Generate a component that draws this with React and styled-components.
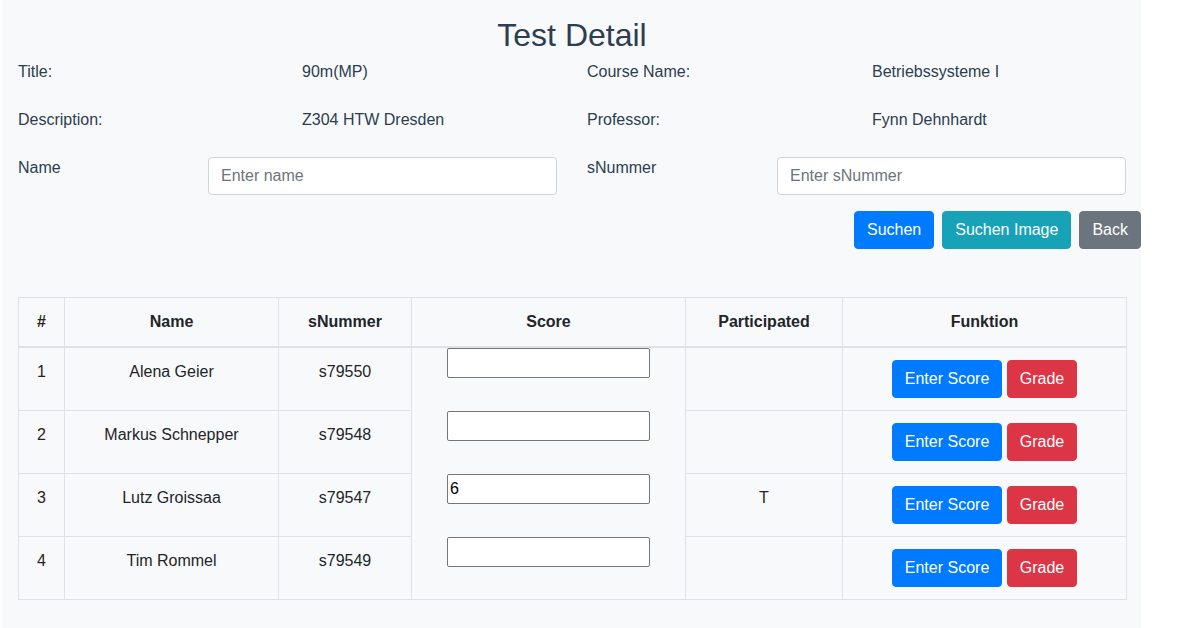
import React from "react";
import styled, { createGlobalStyle } from "styled-components";

const GlobalStyle = createGlobalStyle`
  html, body {
    margin: 0;
    padding: 0;
    background: #fff;
  }
  body {
    font-family: "Liberation Sans", Arial, sans-serif;
    font-size: 16px;
    line-height: 1.5;
    color: #2c3e50;
  }
  * {
    box-sizing: border-box;
  }
`;

const students = [
  { id: 1, name: "Alena Geier", snr: "s79550", score: "", participated: "" },
  { id: 2, name: "Markus Schnepper", snr: "s79548", score: "", participated: "" },
  { id: 3, name: "Lutz Groissaa", snr: "s79547", score: "6", participated: "T" },
  { id: 4, name: "Tim Rommel", snr: "s79549", score: "", participated: "" },
];

const App = () => {
  return (
    <>
      <GlobalStyle />
      <Page>
        <Title>Test Detail</Title>

        <InfoGrid>
          <Cell>Title:</Cell>
          <Cell>90m(MP)</Cell>
          <Cell>Course Name:</Cell>
          <Cell>Betriebssysteme I</Cell>
          <Cell>Description:</Cell>
          <Cell>Z304 HTW Dresden</Cell>
          <Cell>Professor:</Cell>
          <Cell>Fynn Dehnhardt</Cell>
        </InfoGrid>

        <SearchGrid>
          <Cell>Name</Cell>
          <Cell>
            <TextInput placeholder="Enter name" />
          </Cell>
          <Cell>sNummer</Cell>
          <Cell>
            <TextInput placeholder="Enter sNummer" />
          </Cell>
        </SearchGrid>

        <Actions>
          <Button $color="#007bff">Suchen</Button>
          <Button $color="#17a2b8">Suchen Image</Button>
          <Button $color="#6c757d">Back</Button>
        </Actions>

        <Table>
          <colgroup>
            <col style={{ width: 46 }} />
            <col style={{ width: 214 }} />
            <col style={{ width: 133 }} />
            <col style={{ width: 274 }} />
            <col style={{ width: 157 }} />
            <col style={{ width: 284 }} />
          </colgroup>
          <thead>
            <tr>
              <Th>#</Th>
              <Th>Name</Th>
              <Th>sNummer</Th>
              <Th>Score</Th>
              <Th>Participated</Th>
              <Th>Funktion</Th>
            </tr>
          </thead>
          <tbody>
            {students.map((s, i) => (
              <tr key={s.id}>
                <Td>{s.id}</Td>
                <Td>{s.name}</Td>
                <Td>{s.snr}</Td>
                <ScoreTd $last={i === students.length - 1}>
                  <ScoreInput defaultValue={s.score} />
                </ScoreTd>
                <Td>{s.participated}</Td>
                <Td>
                  <Button $color="#007bff">Enter Score</Button>{" "}
                  <Button $color="#dc3545">Grade</Button>
                </Td>
              </tr>
            ))}
          </tbody>
        </Table>
      </Page>
    </>
  );
};

export default App;

const Page = styled.div`
  margin-left: 2px;
  width: 1139px;
  min-height: 628px;
  background: #f8f9fa;
  padding: 16px 0 28px 1px;
`;

const Title = styled.h2`
  margin: 0 0 6px;
  font-size: 32px;
  font-weight: 400;
  line-height: 38px;
  text-align: center;
  color: #2c3e50;
`;

const InfoGrid = styled.div`
  display: grid;
  grid-template-columns: 284px 285px 285px 285px;
  grid-auto-rows: 48px;
`;

const SearchGrid = styled.div`
  display: grid;
  grid-template-columns: 190px 379px 190px 379px;
  height: 55px;
`;

const Cell = styled.div`
  padding: 0 15px;
`;

const TextInput = styled.input`
  display: block;
  width: 100%;
  height: 38px;
  margin-top: 1px;
  padding: 6px 12px;
  font-family: inherit;
  font-size: 16px;
  line-height: 1.5;
  color: #495057;
  background: #fff;
  border: 1px solid #ced4da;
  border-radius: 4px;

  &::placeholder {
    color: #6c757d;
  }
`;

const Actions = styled.div`
  display: flex;
  justify-content: flex-end;
  gap: 8px;
  margin-bottom: 48px;
`;

const Button = styled.button`
  display: inline-block;
  height: 38px;
  padding: 6px 12px;
  font-family: inherit;
  font-size: 16px;
  line-height: 1.5;
  color: #fff;
  background: ${(p) => p.$color};
  border: 1px solid ${(p) => p.$color};
  border-radius: 4px;
  cursor: pointer;
`;

const Table = styled.table`
  margin-left: 15px;
  width: 1108px;
  table-layout: fixed;
  border-collapse: collapse;
  color: #212529;
`;

const Th = styled.th`
  padding: 12px;
  font-weight: 700;
  text-align: center;
  vertical-align: bottom;
  border: 1px solid #dee2e6;
  border-bottom: 2px solid #dee2e6;
`;

const Td = styled.td`
  padding: 12px;
  text-align: center;
  vertical-align: top;
  border: 1px solid #dee2e6;
  white-space: nowrap;
`;

const ScoreTd = styled.td`
  padding: 0;
  vertical-align: top;
  border-left: 1px solid #dee2e6;
  border-right: 1px solid #dee2e6;
  border-top: none;
  border-bottom: ${(p) => (p.$last ? "1px solid #dee2e6" : "none")};
`;

const ScoreInput = styled.input`
  display: block;
  margin: 0 auto;
  width: 203px;
  height: 30px;
  padding: 1px 2px;
  font-family: inherit;
  font-size: 16px;
  color: #000;
  background: #fff;
  border: 1px solid #767676;
  border-radius: 2px;
`;
